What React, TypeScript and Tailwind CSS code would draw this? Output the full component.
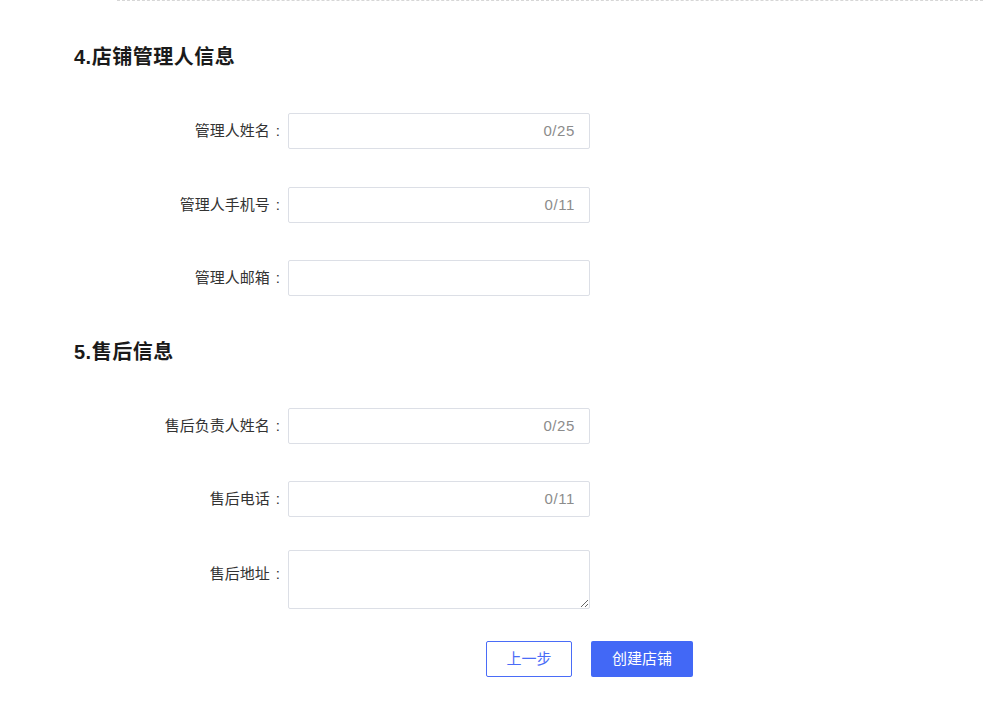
const font = "font-['Helvetica_Neue','Liberation_Sans','Noto_Sans_CJK_SC',sans-serif]";

function Label({ text, className = "" }: { text: string; className?: string }) {
  return (
    <div className={`w-[214px] pr-[8px] text-right text-[15px] text-[#333] ${className}`}>
      {text}
      <span className="ml-[6px]">:</span>
    </div>
  );
}

function Row({ label, counter, className }: { label: string; counter?: string; className: string }) {
  return (
    <div className={`flex items-center h-[36px] ${className}`}>
      <Label text={label} />
      <div className="w-[302px] h-[36px] border border-[#dcdfe6] rounded-[2px] flex items-center justify-end pr-[14px]">
        {counter && <span className="text-[15px] tracking-[0.6px] text-[#8c8c8c]">{counter}</span>}
      </div>
    </div>
  );
}

export default function App() {
  return (
    <div className={`w-[983px] h-[717px] bg-white ${font}`}>
      <div className="ml-[117px] border-t border-dashed border-[#d6d6d6]" />
      <div className="pl-[74px]">
        <h2 className="mt-[44px] h-[24px] leading-[24px] text-[20px] tracking-[0.5px] font-bold text-[#1a1a1a]">4.店铺管理人信息</h2>
        <Row className="mt-[44px]" label="管理人姓名" counter="0/25" />
        <Row className="mt-[38px]" label="管理人手机号" counter="0/11" />
        <Row className="mt-[37px]" label="管理人邮箱" />
        <h2 className="mt-[44px] h-[24px] leading-[24px] text-[20px] tracking-[0.5px] font-bold text-[#1a1a1a]">5.售后信息</h2>
        <Row className="mt-[44px]" label="售后负责人姓名" counter="0/25" />
        <Row className="mt-[37px]" label="售后电话" counter="0/11" />
        <div className="flex items-start mt-[33px]">
          <Label text="售后地址" className="pt-[13px] leading-[22px]" />
          <textarea className="w-[302px] h-[59px] border border-[#dcdfe6] rounded-[2px] outline-none" />
        </div>
      </div>
      <div className="flex mt-[32px] ml-[486px] gap-[19px]">
        <button className="w-[86px] h-[36px] border border-[#4a6cf7] rounded-[2px] bg-white text-[15px] text-[#4a6cf7]">上一步</button>
        <button className="w-[102px] h-[36px] rounded-[2px] bg-[#4268f6] text-[15px] text-white">创建店铺</button>
      </div>
    </div>
  );
}
